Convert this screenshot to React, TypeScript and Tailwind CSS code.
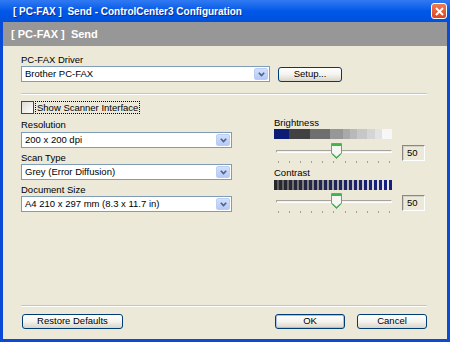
const ui = "font-['Liberation_Sans',Arial,sans-serif]";

function Chevron() {
  return (
    <svg width="7" height="5" viewBox="0 0 7 5">
      <path d="M0.8 0.8 L3.5 3.6 L6.2 0.8" fill="none" stroke="#4d6185" strokeWidth="1.6" />
    </svg>
  );
}

function Combo({ value, className = "" }: { value: string; className?: string }) {
  return (
    <div className={`flex h-[16px] items-stretch border border-[#7f9db9] bg-white ${className}`}>
      <span className="flex-1 truncate pl-[3px] text-[9.5px] leading-[14px] text-black">{value}</span>
      <span className="m-px flex w-[14px] items-center justify-center rounded-[2px] border border-[#bccdf4] bg-linear-to-b from-[#d2e0fd] to-[#b4c9f6]">
        <Chevron />
      </span>
    </div>
  );
}

function XpButton({ label, className = "", primary = false }: { label: string; className?: string; primary?: boolean }) {
  return (
    <div
      className={`flex h-[15px] items-center justify-center rounded-[3px] border border-[#003c74] bg-linear-to-b from-white via-[#f4f3ee] to-[#d9d5c9] text-[9.5px] text-black ${
        primary ? "shadow-[inset_0_0_0_1px_#a8bfe9]" : ""
      } ${className}`}
    >
      {label}
    </div>
  );
}

function Thumb() {
  return (
    <svg width="11" height="16" viewBox="0 0 11 16">
      <path d="M0.5 0.5h10v10l-5 5l-5-5z" fill="#f6f6f2" stroke="#8d8e8c" />
      <rect x="1" y="1" width="9" height="2" fill="#3fb54a" />
      <path d="M1.2 10.6 L5.5 14.8 L9.8 10.6" fill="none" stroke="#3fb54a" strokeWidth="1.2" />
    </svg>
  );
}

function SliderRow() {
  return (
    <>
      <div className="flex h-[18px] items-start">
        <div className="relative h-[18px] w-[120px]">
          <div className="mx-[2px] mt-[7px] h-[3px] rounded-[1px] border border-b-white border-l-[#a6a49a] border-r-white border-t-[#a6a49a] bg-[#f3f2ec]" />
          <div className="absolute left-[57px] top-0">
            <Thumb />
          </div>
        </div>
        <div className="ml-auto mt-[2px] flex h-[16px] w-[23px] items-center border border-b-white border-l-[#8a887f] border-r-white border-t-[#8a887f] pl-[4px] text-[9.5px] text-black shadow-[inset_1px_1px_0_#d4d0c8]">
          50
        </div>
      </div>
      <div className="flex w-[120px] justify-between px-[4px]">
        {Array.from({ length: 11 }).map((_, i) => (
          <span key={i} className="h-[2px] w-px bg-[#a3a196]" />
        ))}
      </div>
    </>
  );
}

const brightness: [number, string][] = [
  [15, "#0c1c74"],
  [21, "#414141"],
  [20, "#6f6f6f"],
  [13, "#979797"],
  [7, "#a9a9a9"],
  [7, "#b9b9b9"],
  [10, "#c7c7c7"],
  [8, "#d5d5d5"],
  [7, "#e3e3e3"],
  [10, "#f7f7f7"],
];

function mix(a: number[], b: number[], t: number) {
  return `rgb(${a.map((v, i) => Math.round(v + (b[i] - v) * t)).join(",")})`;
}

export default function App() {
  return (
    <div className={`flex h-[342px] w-[450px] flex-col overflow-hidden bg-[#0a4bd6] ${ui}`}>
      {/* title bar */}
      <div className="flex h-[22px] items-center bg-linear-to-b from-[#2f7af2] via-[#0058e8] to-[#0050dc] pl-[13px] pr-[3px]">
        <span className="whitespace-pre text-[10px] font-bold text-white [text-shadow:1px_1px_#0b2a9a]">
          {"[ PC-FAX ]  Send - ControlCenter3 Configuration"}
        </span>
        <span className="ml-auto flex h-[16px] w-[16px] items-center justify-center rounded-[3px] border border-white bg-linear-to-b from-[#ee7a52] to-[#d9441c]">
          <svg width="9" height="9" viewBox="0 0 9 9">
            <path d="M1 1 L8 8 M8 1 L1 8" stroke="white" strokeWidth="2" />
          </svg>
        </span>
      </div>

      <div className="mx-[3px] flex flex-1 flex-col">
        {/* header band */}
        <div className="flex h-[24px] items-center bg-[#979797] pl-[8px]">
          <span className="whitespace-pre text-[11px] font-bold text-white">{"[ PC-FAX ]  Send"}</span>
        </div>

        {/* body */}
        <div className="flex flex-1 flex-col bg-[#ece9d8] pl-[18px] pr-[20px] text-[9.5px] text-black">
          <div className="mt-[7px] h-[13px] leading-[13px]">PC-FAX Driver</div>
          <div className="flex items-center gap-[8px]">
            <Combo value="Brother PC-FAX" className="w-[249px]" />
            <XpButton label="Setup..." className="w-[64px]" />
          </div>

          <div className="mt-[11px] h-[2px] border-b border-t border-b-white border-t-[#c9c6b6]" />

          <div className="mt-[6px] flex h-[13px] items-center">
            <span className="h-[13px] w-[13px] border border-[#1c5180] bg-linear-to-br from-[#dcdcd6] to-white" />
            <span className="ml-px h-[13px] border border-dotted border-black px-px leading-[11px]">
              Show Scanner Interface
            </span>
          </div>

          <div className="mt-[2px] flex">
            <div className="flex w-[211px] flex-col pt-[2px]">
              <div className="h-[13px] leading-[13px]">Resolution</div>
              <Combo value="200 x 200 dpi" className="mt-px" />
              <div className="mt-[3px] h-[13px] leading-[13px]">Scan Type</div>
              <Combo value="Grey (Error Diffusion)" />
              <div className="mt-[3px] h-[13px] leading-[13px]">Document Size</div>
              <Combo value="A4 210 x 297 mm (8.3 x 11.7 in)" />
            </div>

            <div className="ml-[42px] flex w-[151px] flex-col">
              <div className="h-[13px] leading-[13px]">Brightness</div>
              <div className="flex h-[10px] w-[118px]">
                {brightness.map(([w, c], i) => (
                  <span key={i} className="h-full" style={{ width: w, background: c }} />
                ))}
              </div>
              <div className="mt-[4px]">
                <SliderRow />
              </div>

              <div className="mt-[3px] h-[13px] leading-[13px]">Contrast</div>
              <div className="mt-px flex h-[10px] w-[118px] overflow-hidden bg-[#d8d8d8]">
                {Array.from({ length: 24 }).map((_, i) => {
                  const t = i / 23;
                  return (
                    <span key={i} className="flex h-full">
                      <span className="h-full w-[3px]" style={{ background: mix([40, 40, 44], [22, 32, 130], t) }} />
                      <span className="h-full w-[2px]" style={{ background: mix([95, 95, 95], [240, 240, 240], t) }} />
                    </span>
                  );
                })}
              </div>
              <div className="mt-[3px]">
                <SliderRow />
              </div>
            </div>
          </div>

          {/* footer */}
          <div className="mt-auto h-[2px] border-b border-t border-b-white border-t-[#c9c6b6]" />
          <div className="mb-[10px] mt-[7px] flex items-center">
            <XpButton label="Restore Defaults" className="ml-px w-[101px]" />
            <XpButton label="OK" primary className="ml-auto w-[70px]" />
            <XpButton label="Cancel" className="ml-[12px] w-[70px]" />
          </div>
        </div>
      </div>
      <div className="h-[3px]" />
    </div>
  );
}
